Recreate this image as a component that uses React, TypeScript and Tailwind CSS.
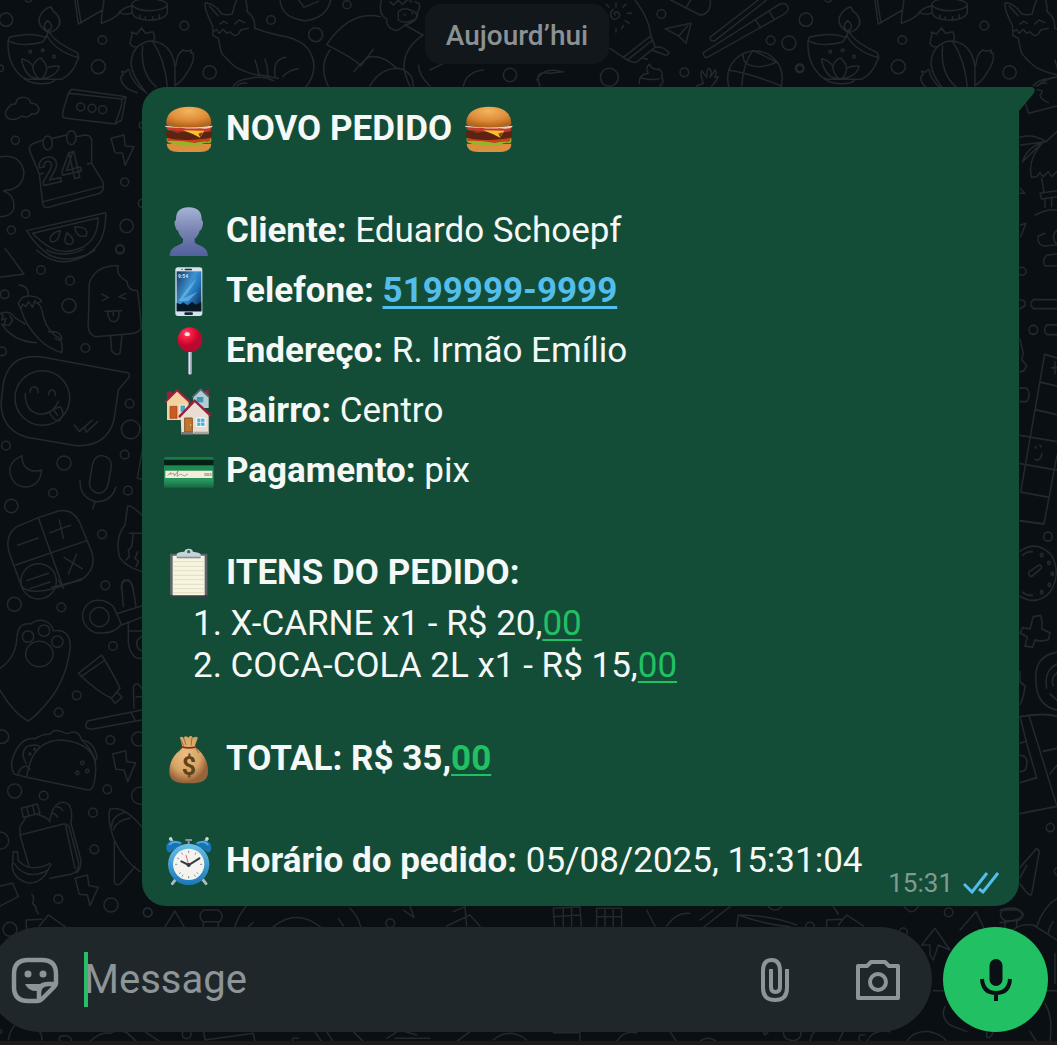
import type { ReactNode } from "react";

function Doodles() {
  return (
    <svg className="absolute inset-0 h-full w-full" aria-hidden="true" fill="none" stroke="#23292d" strokeWidth="4.5" strokeLinecap="round" strokeLinejoin="round">
      <defs>
        <g id="tile-top">
          <path d="M28 112Q95 95 135 112Q142 108 145 88Q152 120 232 158Q240 180 232 180Q220 220 185 238H75Q30 205 25 150Q22 125 28 112zM28 124Q70 142 128 126L142 108Q165 152 232 172M145 98Q108 75 120 48Q132 25 153 20Q158 35 170 42Q190 68 168 88Q160 96 145 98zM145 96Q122 80 143 62Q165 78 145 96M65 176Q90 182 98 198Q110 175 123 174Q138 190 140 204Q158 196 178 199Q172 222 145 232Q118 242 92 230Q68 210 65 176zM98 198Q100 225 120 238M140 204Q140 225 122 238M75 234Q80 248 120 251Q158 252 166 238" />
          <circle cx="91" cy="155" r="4" /><circle cx="128" cy="151" r="4" /><circle cx="162" cy="170" r="4" />
          <circle cx="18" cy="59" r="20" /><circle cx="307" cy="120" r="13" /><circle cx="295" cy="200" r="21" />
          <circle cx="553" cy="77" r="13" /><circle cx="629" cy="217" r="20" /><circle cx="813" cy="60" r="13" /><circle cx="947" cy="104" r="21" />
          <circle cx="1041" cy="14" r="12" /><circle cx="0" cy="205" r="10" /><circle cx="85" cy="-5" r="11" />
          <path d="M225 0L235 72L308 30L312 0M232 0L243 68M308 30Q304 50 304 70Q345 55 360 38Q375 48 398 38M355 40Q370 22 394 18M395 14Q400 -5 450 -4Q500 0 502 15V40Q490 60 448 61Q405 60 397 40zM395 14Q410 32 450 32Q495 30 502 15M420 45v10M436 50v9M458 50v9M478 44v9" />
          <path d="M390 130Q400 90 394 97L410 102L425 84L437 100L458 95Q468 110 460 124M390 130Q400 145 415 140M440 280Q385 215 395 175Q405 130 450 123Q515 125 525 200L525 258M428 138Q420 220 468 260M458 124Q495 180 502 258M528 195Q530 160 550 150L560 154L575 150L572 158L580 160Q585 185 560 220Q545 245 528 255M412 278Q365 265 362 232L370 224L365 214L376 217L385 208Q392 215 390 222Q405 255 435 275" />
          <path d="M638 105Q642 80 632 65Q612 25 616 8Q645 10 665 42Q685 46 697 42Q705 5 714 -5M735 -5Q742 10 742 35Q768 55 764 85Q820 105 860 110Q940 130 942 200Q940 235 918 260M638 105L655 115Q660 140 665 160Q690 190 710 203Q755 225 785 226Q815 232 835 235M628 18L655 48M640 95L650 88L658 100L670 88L680 100L690 95Q710 120 722 90L745 85M660 72l12-8 10 6M705 72l12-12 18 8M765 180Q775 210 778 230M795 178Q805 205 803 230M826 232Q815 180 857 172M848 230Q865 210 895 206M700 258Q715 238 745 236Q790 225 820 242M710 258q15-12 30-8" />
          <path d="M840 0Q845 55 915 62Q980 55 992 0M895 -2L912 22L955 4M1145 -2Q1135 30 1150 50Q1165 55 1160 70Q1175 95 1195 90L1215 75Q1255 65 1253 35Q1262 25 1258 12L1245 5M1170 5l10 10 15-14 12 12 18-16 10 10M1195 35Q1210 20 1230 30Q1255 35 1250 55Q1215 75 1195 60zM1212 42l4 4M1235 38l4 4M1140 50Q1050 30 980 134Q1070 180 1082 198L1120 148M1062 215Q1090 180 1110 170Q1150 165 1190 205M1110 258Q1140 205 1195 205Q1240 215 1240 258M990 150Q955 200 985 258M1215 75L1268 105M1270 105Q1210 145 1212 205Q1220 240 1230 258M1256 195Q1255 225 1290 258" />
        </g>
      </defs>
      <g transform="scale(.3333)">
        <use href="#tile-top" />
        <use href="#tile-top" x="2400" />
        <path d="M20 330Q30 310 47 312Q50 292 68 292Q88 292 93 310Q115 310 117 330Q112 345 95 341Q85 357 65 348Q45 365 22 354Q12 340 20 330zM205 280L365 297Q370 310 345 372L193 354Q185 350 190 330zM205 280L215 268L378 290L365 360L345 372M365 297L378 290" />
        <circle cx="242" cy="321" r="12" /><circle cx="276" cy="325" r="12" /><circle cx="308" cy="329" r="12" />
        <path d="M128 420L95 433Q85 440 90 455L118 522L128 610Q130 625 145 622L300 580Q315 570 308 545L275 490V420Q272 405 255 405L228 410M158 415L200 405M118 522L130 520M262 492L275 490M130 605L305 560" />
        <ellipse cx="143" cy="429" rx="14" ry="21" /><ellipse cx="214" cy="413" rx="14" ry="21" />
        <text x="126" y="558" transform="rotate(-13 126 558)" fontFamily="Roboto, sans-serif" fontWeight="700" fontSize="112">24</text>
        <path d="M333 415L372 405L376 438L402 440L375 496L368 460L345 458zM0 470Q60 460 72 515Q70 570 10 572Q50 590 40 630Q30 650 0 650M80 692L317 638Q320 725 265 762Q200 790 148 765Q105 735 80 692zM98 700L294 654Q295 715 248 742Q195 765 155 745Q120 725 98 700z" />
        <path d="M181 692Q145 700 152 725Q175 730 181 692zM201 698Q185 735 211 733Q232 725 201 698zM225 680Q228 715 258 708Q270 680 225 680z" />
        <circle cx="46" cy="421" r="12" /><circle cx="374" cy="546" r="12" /><circle cx="77" cy="642" r="12" /><circle cx="34" cy="690" r="12" /><circle cx="380" cy="678" r="20" /><circle cx="360" cy="747" r="12" /><circle cx="427" cy="610" r="12" /><circle cx="427" cy="376" r="9" />
      </g>
      <g transform="translate(0 250) scale(.3333)">
        <path d="M15 -5L72 72L0 82M110 0Q185 70 285 0M140 0Q190 25 250 -2M268 100Q285 45 355 47Q345 75 382 95Q380 120 412 122Q420 170 424 235Q415 250 385 252L285 260Q260 250 265 215zM332 260L335 302Q345 318 360 310L366 257M305 132l20 10-18 10M377 130l-20 10 20 7M315 184L365 182M323 184Q325 218 344 215Q360 210 356 183M340 184v14" />
        <path d="M57 105Q85 105 85 138M55 160Q65 135 90 138Q120 140 125 155L110 160L104 152L98 172L85 155L78 170L68 162L62 178zM64 180Q75 225 120 270Q145 295 185 308Q190 285 180 265Q145 250 130 200Q125 165 112 160M0 190Q30 180 45 203L75 222M0 190L10 195L5 210L18 205L12 225L28 225L38 210L30 198M5 222Q40 275 110 278M145 245Q180 240 186 265Q182 275 165 265" />
        <path d="M130 322Q30 305 10 400L3 460Q5 540 80 562L230 587Q320 590 342 510L355 420L388 380Q392 368 375 367z" />
        <circle cx="127" cy="444" r="82" /><path d="M90 428Q90 410 103 410Q115 412 114 428M145 435Q147 418 158 420Q168 425 165 437M76 430Q75 490 125 493Q160 490 175 455M148 488Q160 475 182 470L189 488Q190 500 178 512Q165 515 148 488zM163 482l10 14M223 525L238 545L277 510M253 530L259 547L293 515" />
        <path d="M66 617Q25 635 30 670Q40 710 78 711Q120 708 125 660Q95 670 75 650Q65 635 66 617zM268 700L277 645Q285 615 308 617Q335 620 334 650L325 700Q318 730 295 730Q270 725 268 700zM240 692Q240 745 290 755Q335 755 347 712M285 755L278 776M427 600L412 685L427 688" />
        <path d="M115 803L175 783Q220 775 240 820L275 905Q290 955 250 985L165 1015Q90 1035 65 1010L30 915Q10 860 50 830zM115 803L190 1015M47 945L260 872M53 886L115 864M178 810l12 55M150 848l62-22M192 922l55 35M230 912l-25 60" />
        <circle cx="116" cy="994" r="53" /><path d="M80 992l65-22M90 1016l60-20M383 768Q395 765 425 795M383 768L375 825Q345 860 358 920Q375 950 425 965M388 850H425M400 850L395 890L385 900L388 920L378 930M413 905L405 925L415 935L408 950M365 1020Q360 985 385 990Q398 1000 400 1020" />
        <circle cx="123" cy="60" r="13" /><circle cx="210" cy="92" r="13" /><circle cx="207" cy="167" r="21" /><circle cx="256" cy="294" r="13" /><circle cx="14" cy="133" r="13" /><circle cx="6" cy="304" r="13" /><circle cx="389" cy="461" r="13" /><circle cx="392" cy="538" r="28" /><circle cx="374" cy="614" r="13" /><circle cx="18" cy="587" r="13" /><circle cx="192" cy="639" r="21" /><circle cx="159" cy="729" r="13" /><circle cx="34" cy="768" r="20" /><circle cx="384" cy="722" r="13" /><circle cx="306" cy="853" r="13" /><circle cx="360" cy="-1" r="13" />
      </g>
      <g transform="translate(0 580) scale(.3333)">
        <path d="M0 265Q45 235 50 180Q52 125 92 132Q110 118 132 122Q155 130 160 152Q210 145 211 200Q200 295 150 358Q110 408 85 423Q40 400 0 330M155 22L245 0M175 0L186 20" />
        <circle cx="84" cy="170" r="17" /><circle cx="132" cy="152" r="17" /><circle cx="172" cy="185" r="17" /><ellipse cx="118" cy="222" rx="41" ry="38" />
        <circle cx="298" cy="111" r="29" /><path d="M362 135Q340 165 285 158Q245 140 248 100Q260 55 310 62Q335 70 343 85L365 135L425 112M355 100L425 78M370 80L365 15Q370 -2 388 2Q398 8 408 80M385 130V190Q395 240 425 235M425 170Q405 180 412 200Q415 210 425 212M385 153H425" />
        <path d="M235 280L305 225Q350 300 360 325L335 355Q290 335 235 280zM243 290L315 240M332 352L345 370L366 352L350 335M425 390L265 422Q250 435 262 445L275 448L425 420M393 397L405 420M402 385L400 320Q410 300 425 325M425 350H408" />
        <path d="M42 582Q30 560 38 535Q60 470 105 476Q130 460 150 463Q160 445 185 455Q205 465 210 458Q235 450 245 480Q285 485 291 535L285 540M80 592L42 582M80 592Q95 480 185 480Q290 490 287 570Q285 630 265 630zM78 550Q60 520 80 500Q105 490 120 500M55 580Q60 560 80 558L90 568M245 480Q278 510 287 545" />
        <circle cx="90" cy="522" r="3" /><circle cx="104" cy="508" r="3" /><circle cx="247" cy="549" r="5" /><circle cx="232" cy="579" r="5" /><circle cx="262" cy="573" r="5" />
        <path d="M338 522L377 512L380 545L407 548L383 605L372 570L348 568zM70 712L64 685L112 672L120 700zM80 682l7 28M98 677l6 26M78 712L60 740V765L88 862M60 765L190 732Q207 730 210 750L235 845Q240 875 215 882L150 895M115 705Q140 710 150 725M150 720Q155 680 180 668Q215 660 215 710L213 730L240 830Q248 860 230 878M197 738L225 865M170 680q12 0 18 12M155 700q12 0 18 12M40 815L52 815L55 842Q90 880 150 850Q155 855 148 862Q125 915 80 908Q30 890 38 845zM42 850Q80 905 145 870" />
        <path d="M425 740Q370 675 330 688Q320 720 343 780Q370 840 420 875M340 750Q350 720 390 715M335 740Q335 708 372 698M343 785V905Q345 920 362 910L405 860M225 895L262 885L267 917L295 922L270 977L262 945L238 943zM0 918L38 910L55 950L0 978M95 943Q105 952 98 970Q110 980 108 990L115 1002M125 1018L78 1020L80 1050M118 1038L145 1005L195 1040" />
        <circle cx="43" cy="73" r="21" /><circle cx="184" cy="82" r="13" /><circle cx="316" cy="16" r="13" /><circle cx="339" cy="198" r="13" /><circle cx="230" cy="346" r="13" /><circle cx="176" cy="397" r="13" /><circle cx="6" cy="470" r="20" /><circle cx="331" cy="480" r="13" /><circle cx="416" cy="477" r="21" /><circle cx="44" cy="633" r="21" /><circle cx="131" cy="647" r="13" /><circle cx="322" cy="628" r="13" /><circle cx="421" cy="647" r="26" /><circle cx="279" cy="698" r="13" /><circle cx="283" cy="808" r="13" /><circle cx="0" cy="782" r="26" /><circle cx="175" cy="957" r="13" /><circle cx="333" cy="975" r="21" /><circle cx="443" cy="997" r="13" /><circle cx="30" cy="1048" r="21" />
      </g>
      <g transform="translate(600 0) scale(.3333)">
        <path d="M105 0Q150 60 152 108L70 172Q95 190 110 186L165 142Q160 120 152 108M30 145L70 172M85 178L158 120M165 142Q185 138 205 155Q210 165 195 165L155 150M130 175l12 3M46 45q-8-8 3-10q14 4 8 16q-12 12-22 2q-8-16 5-25M48 8v13M18 12l9 9M78 12l-9 10M82 40h13M76 62l12 8M70 78l-5 8M48 85v12M12 88l8-8" />
        <path d="M195 86L273 70L258 130L236 108zM236 108L262 78M212 0L300 45Q325 45 331 15V0M260 20l12-20M475 0L330 112Q330 125 345 122L500 0M310 158L540 12Q560 5 565 25Q565 35 550 44L322 172Q310 174 310 158zM468 62l14 22M508 35l14 22" />
        <path d="M118 250Q115 225 145 220Q135 205 148 192Q155 210 178 208Q190 220 185 232Q195 245 180 258M125 235Q160 242 178 236M290 258L310 250Q300 225 305 212L320 232Q320 205 328 205Q338 215 330 232L345 210Q352 210 345 232L355 230Q345 250 335 258" />
        <circle cx="465" cy="235" r="82" />
        <path d="M430 162Q425 200 480 200Q520 195 530 184M385 210Q450 220 545 258M425 258Q430 190 458 152M460 152Q500 170 535 190" />
        <circle cx="184" cy="42" r="13" /><circle cx="253" cy="217" r="13" /><circle cx="28" cy="232" r="27" /><circle cx="512" cy="121" r="13" /><circle cx="567" cy="129" r="21" /><circle cx="599" cy="205" r="13" />
        <path d="M1276 310L1286 340L1371 318M1312 258Q1330 238 1371 230M1312 270Q1330 268 1325 280Q1310 290 1345 308M1260 412Q1300 400 1338 425L1262 435M1338 425L1371 395M1335 425Q1280 440 1268 485L1330 425Q1280 480 1295 532L1310 530L1320 518L1330 530L1345 515L1355 530L1371 515M1325 535L1332 575M1320 580L1371 572M1320 580L1325 597L1371 590M1335 597v25M1355 595v25M1305 645Q1345 625 1371 630M1260 565L1275 580H1260M1262 675L1278 670L1262 710M1371 690Q1350 710 1371 735L1330 738Q1310 730 1315 708L1335 700M1371 762L1340 766Q1325 780 1335 798L1371 797" />
        <circle cx="1266" cy="814" r="12" />
      </g>
      <g transform="translate(1000 280) scale(.3333 .408)">
        <path d="M175 48H100Q85 60 100 70H175M60 48Q80 50 75 63L60 70M175 110H140Q128 122 140 134H175M60 145L70 180L65 195L80 210L72 222L60 225M60 265H80Q95 280 80 298H60M175 192L134 182L62 520M120 250L171 260M107 318L171 330M60 381L171 396M60 450L171 466M62 520L145 532M60 590L132 598L171 430M155 215h16M165 200v30" />
        <path d="M60 665Q110 635 155 675Q185 720 150 765Q110 800 60 775M68 675Q80 665 97 666M68 765Q80 775 97 772M87 715L118 698Q128 700 122 708L95 727Q84 725 87 715zM106 440Q122 445 126 425M106 408l3 4M120 405l3 4M100 825L122 822L127 840L125 855L150 865L145 882L120 885L105 882L98 900L75 897L82 875L60 865L68 852L90 855zM175 912Q100 920 108 985Q110 1045 175 1055M175 940Q130 955 140 1000M175 960Q150 975 160 995M150 1015l21 15" />
        <path d="M60 960V985L75 995Q70 1030 60 1040M60 1070Q140 1060 171 1070M88 1070L171 1290L60 1308M60 1070L80 1135L110 1220L60 1232M80 1130L60 1135M60 1165Q85 1165 80 1190Q78 1205 60 1205M130 1155L171 1148M150 1210L171 1190M60 1440L110 1393L118 1400L95 1505Q90 1515 60 1480M60 1465L80 1435M0 1545Q50 1530 70 1555Q65 1570 0 1575" />
        <ellipse cx="144" cy="629" rx="13" ry="11" /><ellipse cx="100" cy="122" rx="13" ry="11" /><ellipse cx="151" cy="1342" rx="12" ry="10" /><circle cx="125" cy="674" r="4" /><circle cx="147" cy="693" r="4" /><circle cx="157" cy="720" r="4" /><circle cx="148" cy="747" r="4" /><circle cx="125" cy="765" r="4" />
      </g>
      <g transform="translate(0 900) scale(.3333)">
        <path d="M495 80L525 33L552 80M610 30H655Q675 45 660 65H610Q590 50 610 30zM610 65V80M655 65V80M705 80Q715 45 740 17M820 80Q890 25 960 80M1050 25Q1075 50 1082 80M745 80l15-13M1015 55l15 22M1230 18L1242 52L1210 30" />
        <path d="M25 420Q30 390 45 375M75 375Q130 385 125 420M180 425Q170 405 200 408Q215 410 215 425M270 425Q300 395 330 400Q350 385 380 398L410 425M420 385L480 425M610 390L615 420L760 400L765 425M880 425Q870 410 895 415M945 395L965 425M980 395L1000 425M1060 395L1090 425M1160 415L1200 390L1250 405M1185 415H1290" />
        <circle cx="443" cy="38" r="13" /><circle cx="1171" cy="70" r="13" /><circle cx="560" cy="403" r="13" /><circle cx="0" cy="395" r="5" />
        <path d="M1340 78L1410 45L1440 78M1400 78L1395 20L1360 35M1660 25L1740 20L1744 78M1660 25L1664 78M1690 24v54M1715 22v56M1660 50L1742 45M1790 25H1865V78M1790 25V78M1815 25v53M1840 25v53M1790 50h75M1940 30L1965 78M2000 78Q2030 35 2070 40" />
        <path d="M1370 425L1410 395M1480 420Q1530 380 1580 420M1660 398H1740V425M1850 425Q1870 390 1910 398M2010 395L2030 425" />
      </g>
      <g transform="translate(700 850) scale(.3333)">
        <path d="M0 210L40 180M0 240L90 170M110 230L115 195Q210 195 290 225M115 195Q200 225 270 230M205 170Q225 190 245 170M400 170L415 192M380 230V210L425 208M415 225L440 195L490 228M613 170Q635 200 655 170M665 285L705 235L750 300L715 285L700 330L690 315L690 285zM780 240L828 185L855 240M910 180H955Q980 195 955 212H915Q890 195 910 180zM915 212V235M950 212V230M940 240Q960 220 1000 225L1071 270M1010 230Q1030 170 1071 145M1045 248Q1050 225 1060 215M700 422H730M1040 422H1071M1065 310V400" />
        <path d="M735 470Q720 500 750 525L800 545M1035 460Q1060 500 1050 575M860 545V560Q870 570 880 545M190 545L195 555L205 545M250 545Q250 570 280 572Q305 570 302 545M330 575Q335 550 345 545M415 575L430 545M480 575Q470 550 495 555M500 575Q520 535 570 545M620 575Q640 540 690 545Q730 555 740 575M0 575Q20 555 50 575M990 545L1010 575" />
        <circle cx="746" cy="187" r="13" /><circle cx="330" cy="230" r="13" /><circle cx="610" cy="246" r="12" /><circle cx="1075" cy="64" r="12" />
      </g>
      <g transform="translate(430 0) scale(.3333)">
        <path d="M0 210L40 190M100 258Q110 215 160 210M330 258Q310 210 360 220L400 215M320 240Q340 200 395 215" />
        <circle cx="240" cy="225" r="20" />
      </g>
    </svg>
  );
}

function Emoji({ label, box, children }: { label: string; box: string; children: ReactNode }) {
  return (
    <svg role="img" aria-label={label} viewBox={box} className="size-[50px] shrink-0">
      {children}
    </svg>
  );
}

function Burger() {
  return (
    <Emoji label="Hambúrguer" box="42 39 150 150">
      <defs>
        <radialGradient id="bun" cx=".5" cy=".2" r=".75">
          <stop offset="0" stopColor="#f5b45d" /><stop offset=".6" stopColor="#de8e3a" /><stop offset="1" stopColor="#b5641b" />
        </radialGradient>
      </defs>
      <path d="M50 158H184Q184 182 150 183H85Q50 182 50 158z" fill="#dc8f3d" />
      <path d="M50 142H184Q186 158 176 156Q160 154 152 161Q135 168 120 161Q100 168 85 160Q70 162 60 156Q48 155 50 142z" fill="#93b52c" />
      <path d="M52 140H183L178 152Q150 150 135 156Q90 148 52 150z" fill="#c94016" />
      <path d="M47 124Q55 117 116 118Q185 118 187 126Q187 142 165 143L120 147Q60 147 50 138z" fill="#5b2312" />
      <path d="M48 110H184L182 120Q160 127 120 124L55 118z" fill="#c23a2b" />
      <path d="M100 118L163 119L157 128L150 140L130 130z" fill="#ffc02b" />
      <path d="M58 117L100 122L82 127zM145 128L158 123L151 140z" fill="#8c3818" />
      <path d="M46 104Q115 112 187 104V108Q172 116 150 112Q120 114 90 110Q60 111 46 108z" fill="#efd0c0" />
      <path d="M49 96Q49 60 90 50Q117 45 145 50Q182 60 184 96Q184 105 170 106Q116 113 64 106Q49 105 49 96z" fill="url(#bun)" />
    </Emoji>
  );
}

function Person() {
  return (
    <Emoji label="Pessoa" box="42 345 150 150">
      <defs><linearGradient id="bust" x2="0" y2="1"><stop stopColor="#a4b3d5" /><stop offset=".5" stopColor="#7782b0" /><stop offset="1" stopColor="#515f9c" /></linearGradient></defs>
      <path d="M116 349C88 349 77 364 78 388C73 388 72 397 77 410Q79 418 84 419Q88 435 99 443V454C94 464 61 462 59 495H174C172 462 138 464 134 454V443Q145 435 149 419Q154 418 157 408C161 397 159 388 155 388C156 364 145 349 116 349z" fill="url(#bust)" />
    </Emoji>
  );
}

function Phone() {
  return (
    <Emoji label="Celular" box="42 15 150 150">
      <defs><linearGradient id="screen" x2="1" y2=".8"><stop stopColor="#17335d" /><stop offset=".48" stopColor="#3c94d0" /><stop offset=".7" stopColor="#2273ba" /><stop offset="1" stopColor="#123158" /></linearGradient></defs>
      <rect x="76" y="19" width="81" height="146" rx="8" fill="#d6e3ec" />
      <rect x="80" y="31" width="74" height="120" fill="url(#screen)" />
      <path d="M85 120Q110 82 139 52Q127 82 98 113L143 92L115 120z" fill="#70bceb" opacity=".65" />
      <path d="M80 126L92 130L99 124L113 133L126 122L137 131L154 124V151H80z" fill="#071724" />
      <rect x="104" y="23" width="22" height="5" rx="2" fill="#182c3a" /><circle cx="96" cy="25" r="2" fill="#182c3a" />
      <rect x="103" y="154" width="26" height="8" rx="4" fill="#142333" />
      <text x="84" y="51" fontFamily="Roboto, sans-serif" fontWeight="700" fontSize="15" fill="#cbe4f4">9:54</text>
    </Emoji>
  );
}

function Pin() {
  return (
    <Emoji label="Endereço" box="42 195 150 150">
      <defs><radialGradient id="pinhead" cx=".35" cy=".25"><stop stopColor="#ff829a" /><stop offset=".25" stopColor="#f82b50" /><stop offset=".7" stopColor="#e30d35" /><stop offset="1" stopColor="#b80a2e" /></radialGradient></defs>
      <path d="M114 268H126V337Q120 346 114 337z" fill="#929dab" /><path d="M117 270H121V340H117z" fill="#dce3e8" />
      <circle cx="120" cy="236" r="37" fill="url(#pinhead)" /><ellipse cx="112" cy="220" rx="8" ry="6" fill="#fff" opacity=".8" />
    </Emoji>
  );
}

function Houses() {
  return (
    <Emoji label="Casas" box="42 15 150 150">
      <path d="M50 35Q60 25 70 38L67 55H52z" fill="#98213b" /><path d="M166 28H176V55H166z" fill="#a5203e" />
      <path d="M130 48L152 27L176 48V81H128z" fill="#b2ced2" /><path d="M127 49L152 25L178 49" fill="none" stroke="#526e77" strokeWidth="5" />
      <path d="M140 48h20v16h-20z" fill="#3b9ab9" />
      <path d="M51 60L81 28L116 60V117H51z" fill="#f1d2a0" /><path d="M47 62L81 28L119 63" fill="none" stroke="#a6203e" strokeWidth="6" strokeLinecap="round" />
      <path d="M60 76h21v36H60z" fill="#ca5a24" stroke="#9f4119" strokeWidth="2" /><path d="M90 72h17v22H90z" fill="#45a6c7" stroke="#eee" strokeWidth="3" />
      <path d="M92 103L134 61L176 103V158H94z" fill="#e7ddd3" /><path d="M89 106L134 59L181 103" fill="none" stroke="#9b1e3f" strokeWidth="7" strokeLinecap="round" />
      <path d="M104 111h23v42h-23z" fill="#bd7731" stroke="#8b5426" strokeWidth="3" /><circle cx="122" cy="132" r="2" fill="#f6d377" />
      <path d="M140 111h25v25h-25z" fill="#49b1d6" stroke="#fff" strokeWidth="3" /><path d="M152 111v25M140 124h25" stroke="#fff" strokeWidth="2" />
      <path d="M94 153h35v8H94z" fill="#7e7877" /><path d="M131 152h45v8h-45z" fill="#a9a29a" />
    </Emoji>
  );
}

function Card() {
  return (
    <Emoji label="Cartão" box="42 195 150 150">
      <defs><linearGradient id="card" x2="0" y2="1"><stop stopColor="#187a44" /><stop offset=".75" stopColor="#259a61" /><stop offset="1" stopColor="#17683f" /></linearGradient></defs>
      <rect x="42" y="228" width="149" height="92" rx="5" fill="url(#card)" /><path d="M42 236H191V253H42z" fill="#061f16" /><path d="M46 269H187V291H46z" fill="#f4eddc" />
      <path d="M53 284Q67 267 60 280L72 277L73 285L84 270L81 286L92 279L103 285L114 279" stroke="#817a71" strokeWidth="2" fill="none" /><text x="163" y="284" fontFamily="Roboto, sans-serif" fontSize="13" fontWeight="700" fill="#85807a">003</text>
    </Emoji>
  );
}

function Clipboard() {
  return (
    <Emoji label="Lista" box="42 21 150 150">
      <path d="M60 38H172V168H60z" fill="#59666a" /><path d="M60 162H172V168H60z" fill="#353f43" />
      <path d="M68 44H164V163H68z" fill="#f8f5df" /><path d="M68 62H164M68 76H164M68 89H164M68 103H164M68 116H164M68 130H164M68 143H164M68 155H164" stroke="#d3d1bb" strokeWidth="2" />
      <path d="M80 39Q82 33 103 32Q105 23 116 23Q127 23 129 32Q149 34 152 40V48H80z" fill="#c8d2d9" /><circle cx="116" cy="32" r="5" fill="#46635d" /><path d="M80 47H152V52H80z" fill="#87949a" />
    </Emoji>
  );
}

function MoneyBag() {
  return (
    <Emoji label="Dinheiro" box="42 39 150 150">
      <defs><radialGradient id="sack" cx=".42" cy=".38" r=".6"><stop stopColor="#e8c184" /><stop offset=".65" stopColor="#d6a363" /><stop offset="1" stopColor="#98623a" /></radialGradient></defs>
      <path d="M90 50Q92 44 101 51Q105 41 115 50Q123 39 128 50Q140 44 144 50L135 73L138 81C160 98 174 118 174 152C174 177 158 187 116 187S58 177 58 152C58 118 77 96 98 80z" fill="url(#sack)" />
      <path d="M101 51L108 72M126 50L123 74M92 55L101 74M100 74L85 94M137 83L147 96" stroke="#805126" strokeWidth="3" opacity=".7" /><path d="M97 78Q116 83 138 78" fill="none" stroke="#8b2d1a" strokeWidth="5" strokeLinecap="round" />
      <text x="117" y="163" textAnchor="middle" fontFamily="Roboto, sans-serif" fontWeight="700" fontSize="75" fill="#624219">$</text>
    </Emoji>
  );
}

function Clock() {
  return (
    <Emoji label="Despertador" box="42 345 150 150">
      <defs><linearGradient id="clockring" x2="0" y2="1"><stop stopColor="#69c1e8" /><stop offset="1" stopColor="#1b78b8" /></linearGradient></defs>
      <path d="M79 473L67 488M156 473L168 488M69 366L62 354M164 366L171 354" stroke="#a8bbc4" strokeWidth="9" strokeLinecap="round" /><circle cx="62" cy="353" r="5" fill="#c9d3d8" /><circle cx="171" cy="353" r="5" fill="#c9d3d8" />
      <path d="M50 388Q43 358 76 359Q91 359 98 367L60 394Q54 395 50 388zM183 388Q189 358 156 359Q142 359 134 367L173 394Q179 395 183 388z" fill="#1874b7" /><path d="M57 372Q72 356 92 367M142 367Q161 356 175 372" fill="none" stroke="#4bb0e5" strokeWidth="5" />
      <path d="M106 357h20M116 358v15" stroke="#87939b" strokeWidth="6" /><circle cx="116" cy="430" r="62" fill="url(#clockring)" /><circle cx="116" cy="430" r="47" fill="#f4f3ef" />
      <path d="M116 389v7M116 465v7M75 430h7M150 430h7M95 395l3 6M138 395l-3 6M87 459l5-5M145 459l-5-5M81 411l6 3M151 411l-6 3M96 467l3-6M136 467l-3-6" stroke="#8e9494" strokeWidth="3" />
      <path d="M116 432L108 402" stroke="#ea6a72" strokeWidth="3" /><path d="M148 412L116 432L94 421" fill="none" stroke="#333c41" strokeWidth="6" strokeLinecap="round" /><circle cx="116" cy="432" r="6" fill="#333c41" />
    </Emoji>
  );
}

function Line({ icon, children }: { icon: ReactNode; children: ReactNode }) {
  return <div className="flex h-[60px] items-center gap-3 whitespace-nowrap">{icon}<p>{children}</p></div>;
}

function Cents() {
  return <a href="#00" className="text-[#21c063] underline decoration-2 underline-offset-4">00</a>;
}

export default function App() {
  return (
    <main className="relative isolate flex min-h-screen flex-col overflow-hidden bg-[#0a0f13] font-[Roboto,sans-serif]">
      <Doodles />
      <div className="relative mt-1 -ml-[23px] flex h-[60px] items-center self-center rounded-2xl bg-[#11171a] px-[21px] pt-1 text-[28px] font-medium text-[#8b9194]">
        <time>Aujourd’hui</time>
      </div>

      <article className="relative mt-[23px] mr-[38px] ml-[142px] rounded-3xl rounded-tr-none bg-[#144d37] px-[22px] pt-3 pb-[15px] text-[35px] leading-[42px] text-[#f5f8f6]">
        <svg className="absolute top-0 -right-4 h-6 w-4" viewBox="0 0 16 24" fill="#144d37" aria-hidden="true"><path d="M0 0H13Q17 1 15 6L0 24z" /></svg>
        <div className="flex h-[60px] items-center gap-3 whitespace-nowrap"><Burger /><h1 className="font-bold">NOVO PEDIDO</h1><Burger /></div>
        <div className="mt-[42px]">
          <Line icon={<Person />}><strong>Cliente:</strong> Eduardo Schoepf</Line>
          <Line icon={<Phone />}><strong>Telefone: <a href="tel:51999999999" className="text-[#53bdeb] underline decoration-3 underline-offset-4">5199999-9999</a></strong></Line>
          <Line icon={<Pin />}><strong>Endereço:</strong> R. Irmão Emílio</Line>
          <Line icon={<Houses />}><strong>Bairro:</strong> Centro</Line>
          <Line icon={<Card />}><strong>Pagamento:</strong> pix</Line>
        </div>
        <div className="mt-[42px]">
          <Line icon={<Clipboard />}><strong>ITENS DO PEDIDO:</strong></Line>
          <ol className="ml-[29px] list-inside list-decimal">
            <li>X-CARNE x1 - R$ 20,<Cents /></li>
            <li>COCA-COLA 2L x1 - R$ 15,<Cents /></li>
          </ol>
        </div>
        <div className="mt-[42px]">
          <Line icon={<MoneyBag />}><strong>TOTAL: R$ 35,<Cents /></strong></Line>
        </div>
        <div className="mt-[42px]">
          <Line icon={<Clock />}><strong>Horário do pedido:</strong> 05/08/2025, 15:31:04</Line>
        </div>
        <div className="absolute right-5 bottom-2 flex items-center gap-2.5 text-[26px] leading-[30px] text-[#809b8f]">
          <time>15:31</time>
          <svg role="img" aria-label="Lida" viewBox="0 0 36 24" className="h-6 w-9" fill="none" stroke="#53bdeb" strokeWidth="3"><path d="M1 13L9 21L24 2M16 18L20 21L35 2" /></svg>
        </div>
      </article>

      <form className="relative mt-auto flex items-center gap-[11px] pt-5 pr-[9px] pb-[9px]" onSubmit={(e) => e.preventDefault()}>
        <div className="-ml-3 flex h-[105px] min-w-0 flex-1 items-center rounded-full bg-[#20272b] pr-[31px] pl-[23px] text-[#8d9598]">
          <button type="button" aria-label="Figurinhas" className="shrink-0">
            <svg viewBox="0 0 48 48" className="size-12" fill="none" stroke="currentColor" strokeWidth="4.5" strokeLinejoin="round">
              <path d="M17 4H31Q45 4 45 18V27Q45 29 43 31L31 43Q29 45 27 45H17Q3 45 3 31V18Q3 4 17 4zM28 45V37Q28 28 37 28H45" />
              <circle cx="17" cy="18" r="3.5" fill="currentColor" stroke="none" /><circle cx="32" cy="18" r="3.5" fill="currentColor" stroke="none" />
              <path d="M14 28H34Q28 30 27 35Q18 36 14 28z" fill="currentColor" stroke="none" />
            </svg>
          </button>
          <span className="ml-[25px] h-[55px] w-1 shrink-0 bg-[#2abd67]" aria-hidden="true" />
          <input aria-label="Message" placeholder="Message" className="-ml-1 min-w-0 flex-1 bg-transparent text-[40px] text-white outline-none placeholder:text-[#8d9598]" />
          <button type="button" aria-label="Anexar" className="shrink-0">
            <svg viewBox="0 0 30 46" className="h-[46px] w-[30px]" fill="none" stroke="currentColor" strokeWidth="4"><path d="M27 12V31Q27 43 15 43T3 31V14Q3 3 11.500 3T20 14V30Q20 35 15.500 35T11 30V12" /></svg>
          </button>
          <button type="button" aria-label="Câmera" className="ml-[65px] shrink-0">
            <svg viewBox="0 0 46 42" className="h-[42px] w-[46px]" fill="none" stroke="currentColor" strokeWidth="4" strokeLinejoin="round"><path d="M3 7H12L16 3H30L34 7H43V39H3z" /><circle cx="23" cy="23" r="8" /></svg>
          </button>
        </div>
        <button type="button" aria-label="Gravar áudio" className="flex size-[105px] shrink-0 items-center justify-center rounded-full bg-[#21c063] text-[#0a1014]">
          <svg viewBox="0 0 32 44" className="h-11 w-8"><rect x="9.5" y="1" width="13" height="27" rx="6.5" fill="currentColor" /><path d="M2 21Q3 35 16 35T30 21M16 34V43" fill="none" stroke="currentColor" strokeWidth="4" /></svg>
        </button>
      </form>
      <div className="relative h-1 bg-[#211819]" />
    </main>
  );
}
